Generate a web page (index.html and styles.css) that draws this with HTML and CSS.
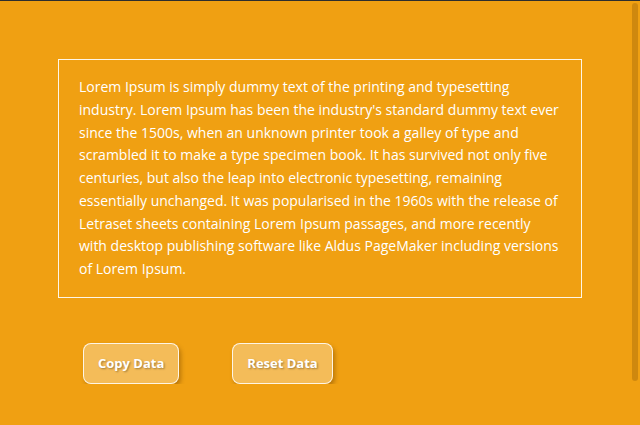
FILE: index.html
```html
<!DOCTYPE html>
<html lang="en">
<head>
    <meta charset="UTF-8">
    <meta name="viewport" content="width=device-width, initial-scale=1.0">
    <title>Copy Data</title>
    <link rel="stylesheet" href="styles.css">
</head>
<body>
    <div class="page">
        <div id="data" class="text-box">
            Lorem Ipsum is simply dummy text of the printing and typesetting industry. Lorem Ipsum has been the industry's standard dummy text ever since the 1500s, when an unknown printer took a galley of type and scrambled it to make a type specimen book. It has survived not only five centuries, but also the leap into electronic typesetting, remaining essentially unchanged. It was popularised in the 1960s with the release of Letraset sheets containing Lorem Ipsum passages, and more recently with desktop publishing software like Aldus PageMaker including versions of Lorem Ipsum.
        </div>

        <div class="actions">
            <button id="copy" class="btn">Copy Data</button>
            <button id="reset" class="btn">Reset Data</button>
        </div>
    </div>

    <!-- scroll thumb -->
    <div class="scroll-thumb"></div>
</body>
</html>
```

FILE: styles.css
```css
html {
    background-color: #f0a012;
}
body {
    margin: 0;
    border-top: 1px solid #2e2e2e;
    background-color: #f0a012;
    font-family: 'Open Sans', sans-serif;
}
.page {
    padding: 58px 0 0 58px;
}
.text-box {
    width: 482px;
    border: 1px solid rgba(255, 255, 255, 0.9);
    padding: 16px 20px 16px 20px;
    color: white;
    font-size: 14px;
    line-height: 22.75px;
}
.actions {
    display: flex;
    gap: 53px;
    margin-top: 45px;
    padding-left: 25px;
}
.btn {
    height: 41px;
    padding: 0 14px;
    font-family: 'Open Sans', sans-serif;
    font-size: 13px;
    font-weight: bold;
    color: white;
    text-shadow: 1px 1px 2px rgba(0, 0, 0, 0.35);
    background-color: rgba(255, 255, 255, 0.3);
    border: 1px solid rgba(255, 255, 255, 0.85);
    border-radius: 8px;
    box-shadow: 2px 3px 4px rgba(120, 70, 0, 0.45);
    cursor: pointer;
}
.scroll-thumb {
    position: fixed;
    top: 3px;
    right: 2px;
    width: 6px;
    height: 378px;
    border-radius: 3px;
    background-color: rgba(90, 50, 0, 0.22);
}
```
